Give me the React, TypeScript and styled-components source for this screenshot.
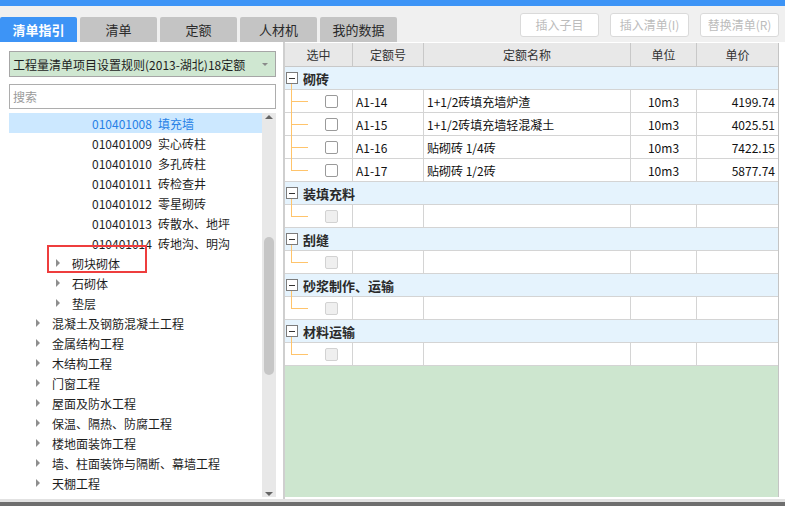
import React from 'react';
import styled, { createGlobalStyle } from 'styled-components';

const GlobalStyle = createGlobalStyle`
  html, body { margin: 0; padding: 0; width: 785px; height: 506px; overflow: hidden; background: #f0f0f0; }
  body { font-family: "Noto Sans CJK SC", "Liberation Sans", sans-serif; font-size: 12px; color: #222; }
  * { box-sizing: border-box; }
`;

const Frame = styled.div`
  display: flex;
  flex-direction: column;
  width: 785px;
  height: 506px;
`;

const TopStripe = styled.div`
  height: 6px;
  flex: none;
  background: #3d94f6;
`;

const Toolbar = styled.div`
  height: 36px;
  flex: none;
  display: flex;
  justify-content: space-between;
  padding-right: 6px;
`;

const Tabs = styled.div`
  display: flex;
  gap: 3px;
  align-self: flex-end;
`;

const Tab = styled.div<{ $active?: boolean }>`
  width: 77px;
  height: 25px;
  display: flex;
  align-items: center;
  justify-content: center;
  border-radius: 2px 2px 0 0;
  font-size: 13px;
  line-height: 1;
  background: ${(p) => (p.$active ? '#3d94f6' : '#c4c4c4')};
  color: ${(p) => (p.$active ? '#ffffff' : '#2a2a2a')};
  font-weight: ${(p) => (p.$active ? 700 : 400)};
`;

const Actions = styled.div`
  display: flex;
  gap: 11px;
  padding-top: 7px;
`;

const ActionButton = styled.button`
  width: 79px;
  height: 24px;
  padding: 0;
  background: #ffffff;
  border: 1px solid #dadada;
  border-radius: 3px;
  color: #bcbcbc;
  font-family: inherit;
  font-size: 12px;
  line-height: 1;
`;

const Main = styled.div`
  flex: 1;
  min-height: 0;
  display: flex;
`;

const LeftPanel = styled.div`
  width: 283px;
  flex: none;
  background: #ffffff;
  padding: 9px 7px 2px 9px;
  display: flex;
  flex-direction: column;
`;

const RuleSelect = styled.div`
  height: 26px;
  flex: none;
  display: flex;
  align-items: center;
  justify-content: space-between;
  padding: 0 7px 0 3px;
  background: #cfe7d1;
  border: 1px solid #a6a6a6;
  color: #1e1e1e;
  white-space: nowrap;
`;

const Caret = styled.span`
  width: 0;
  height: 0;
  border-left: 3px solid transparent;
  border-right: 3px solid transparent;
  border-top: 3px solid #8a8a8a;
`;

const SearchBox = styled.input`
  margin-top: 7px;
  width: 100%;
  height: 25px;
  flex: none;
  padding: 0 3px;
  border: 1px solid #adadad;
  font-family: inherit;
  font-size: 12px;
  color: #222;
  outline: none;
  &::placeholder { color: #9a9a9a; }
`;

const TreeBox = styled.div`
  margin-top: 4px;
  flex: 1;
  min-height: 0;
  display: flex;
`;

const TreeList = styled.div`
  flex: 1;
  overflow: hidden;
`;

const TreeRow = styled.div<{ $indent: number; $selected?: boolean }>`
  position: relative;
  height: 20px;
  display: flex;
  align-items: center;
  padding-left: ${(p) => p.$indent}px;
  white-space: nowrap;
  background: ${(p) => (p.$selected ? '#cce8ff' : 'transparent')};
  color: ${(p) => (p.$selected ? '#2680e6' : '#1e1e1e')};
`;

const Expander = styled.span`
  width: 16px;
  flex: none;
  display: flex;
  align-items: center;
  &::before {
    content: '';
    width: 0;
    height: 0;
    border-top: 4px solid transparent;
    border-bottom: 4px solid transparent;
    border-left: 4px solid #8e8e8e;
  }
`;

const Code = styled.span`
  width: 66px;
  flex: none;
`;

const Marker = styled.span`
  position: absolute;
  z-index: 1;
  left: 38px;
  top: -8px;
  width: 100px;
  height: 28px;
  border: 2px solid #ee3d3d;
  pointer-events: none;
`;

const Scrollbar = styled.div`
  width: 14px;
  flex: none;
  background: #e8e8e8;
  display: flex;
  flex-direction: column;
  align-items: center;
`;

const ArrowUp = styled.span`
  margin-top: 2px;
  width: 0;
  height: 0;
  border-left: 4px solid transparent;
  border-right: 4px solid transparent;
  border-bottom: 4px solid #666;
`;

const ArrowDown = styled.span`
  margin-bottom: 1px;
  width: 0;
  height: 0;
  border-left: 4px solid transparent;
  border-right: 4px solid transparent;
  border-top: 4px solid #666;
`;

const Thumb = styled.span<{ $offset: number; $size: number }>`
  margin-top: ${(p) => p.$offset}px;
  height: ${(p) => p.$size}px;
  width: 10px;
  border-radius: 5px;
  background: #c6c6c6;
`;

const Spacer = styled.span`
  flex: 1;
`;

const RightPanel = styled.div`
  flex: 1;
  display: flex;
  background: #ffffff;
  border-left: 2px solid #cfcfcf;
  padding: 1px 6px 2px 0;
`;

const Table = styled.div`
  flex: 1;
  display: flex;
  flex-direction: column;
  background: #cde6cf;
  border-right: 1px solid #c4c4c4;
`;

const COLS = '68px 71px 207px 66px 1fr';

const HeaderRow = styled.div`
  display: grid;
  grid-template-columns: ${COLS};
  height: 24px;
  flex: none;
  background: #e8e8e8;
  border-bottom: 1px solid #c8c8c8;
`;

const HeaderCell = styled.div`
  display: flex;
  align-items: center;
  justify-content: center;
  color: #333;
  border-right: 1px solid #c8c8c8;
  &:last-child { border-right: none; }
`;

const GroupRow = styled.div`
  position: relative;
  height: 23px;
  flex: none;
  display: flex;
  align-items: center;
  gap: 5px;
  padding-left: 1px;
  background: #e5f3fd;
  border-bottom: 1px solid #d4d4d4;
  font-size: 13px;
  font-weight: 700;
  color: #2a2a2a;
  &::after {
    content: '';
    position: absolute;
    left: 6px;
    top: 17px;
    bottom: -1px;
    width: 1px;
    background: #ffc46b;
  }
`;

const MinusBox = styled.span`
  width: 12px;
  height: 12px;
  flex: none;
  display: flex;
  align-items: center;
  justify-content: center;
  border: 1px solid #7c7c7c;
  background: #ffffff;
  &::before {
    content: '';
    width: 6px;
    height: 1px;
    background: #333;
  }
`;

const DataRow = styled.div`
  display: grid;
  grid-template-columns: ${COLS};
  height: 23px;
  flex: none;
  background: #ffffff;
  border-bottom: 1px solid #d4d4d4;
`;

const Cell = styled.div<{ $align?: 'left' | 'center' | 'right' }>`
  display: flex;
  align-items: center;
  padding: 0 ${(p) => (p.$align === 'right' ? 3 : 3)}px;
  justify-content: ${(p) =>
    p.$align === 'center' ? 'center' : p.$align === 'right' ? 'flex-end' : 'flex-start'};
  border-right: 1px solid #d4d4d4;
  color: #111;
  white-space: nowrap;
  &:last-child { border-right: none; }
`;

const SelectCell = styled.div<{ $last?: boolean }>`
  position: relative;
  display: flex;
  align-items: center;
  padding-left: 40px;
  border-right: 1px solid #d4d4d4;
  &::before {
    content: '';
    position: absolute;
    left: 6px;
    top: 0;
    width: 1px;
    height: ${(p) => (p.$last ? '11px' : '23px')};
    background: #ffc46b;
  }
  &::after {
    content: '';
    position: absolute;
    left: 6px;
    top: 11px;
    width: 17px;
    height: 1px;
    background: #ffc46b;
  }
`;

const CheckBox = styled.span<{ $disabled?: boolean }>`
  width: 13px;
  height: 13px;
  border-radius: 2px;
  border: 1px solid ${(p) => (p.$disabled ? '#d2d2d2' : '#9a9a9a')};
  background: ${(p) => (p.$disabled ? '#efefef' : '#ffffff')};
`;

type TreeItem = { level: 1 | 2 | 3; code?: string; name: string; selected?: boolean; marked?: boolean };

const treeItems: TreeItem[] = [
  { level: 3, code: '010401008', name: '填充墙', selected: true },
  { level: 3, code: '010401009', name: '实心砖柱' },
  { level: 3, code: '010401010', name: '多孔砖柱' },
  { level: 3, code: '010401011', name: '砖检查井' },
  { level: 3, code: '010401012', name: '零星砌砖' },
  { level: 3, code: '010401013', name: '砖散水、地坪' },
  { level: 3, code: '010401014', name: '砖地沟、明沟' },
  { level: 2, name: '砌块砌体', marked: true },
  { level: 2, name: '石砌体' },
  { level: 2, name: '垫层' },
  { level: 1, name: '混凝土及钢筋混凝土工程' },
  { level: 1, name: '金属结构工程' },
  { level: 1, name: '木结构工程' },
  { level: 1, name: '门窗工程' },
  { level: 1, name: '屋面及防水工程' },
  { level: 1, name: '保温、隔热、防腐工程' },
  { level: 1, name: '楼地面装饰工程' },
  { level: 1, name: '墙、柱面装饰与隔断、幕墙工程' },
  { level: 1, name: '天棚工程' },
  { level: 1, name: '油漆、涂料、裱糊工程' },
];

const indentFor = { 1: 27, 2: 47, 3: 83 } as const;

type Quota = { code: string; name: string; unit: string; price: string };
type Group = { title: string; rows: Quota[] };

const groups: Group[] = [
  {
    title: '砌砖',
    rows: [
      { code: 'A1-14', name: '1+1/2砖填充墙炉渣', unit: '10m3', price: '4199.74' },
      { code: 'A1-15', name: '1+1/2砖填充墙轻混凝土', unit: '10m3', price: '4025.51' },
      { code: 'A1-16', name: '贴砌砖 1/4砖', unit: '10m3', price: '7422.15' },
      { code: 'A1-17', name: '贴砌砖 1/2砖', unit: '10m3', price: '5877.74' },
    ],
  },
  { title: '装填充料', rows: [] },
  { title: '刮缝', rows: [] },
  { title: '砂浆制作、运输', rows: [] },
  { title: '材料运输', rows: [] },
];

export default function App() {
  return (
    <Frame>
      <GlobalStyle />
      <TopStripe />
      <Toolbar>
        <Tabs>
          <Tab $active>清单指引</Tab>
          <Tab>清单</Tab>
          <Tab>定额</Tab>
          <Tab>人材机</Tab>
          <Tab>我的数据</Tab>
        </Tabs>
        <Actions>
          <ActionButton>插入子目</ActionButton>
          <ActionButton>插入清单(I)</ActionButton>
          <ActionButton>替换清单(R)</ActionButton>
        </Actions>
      </Toolbar>
      <Main>
        <LeftPanel>
          <RuleSelect>
            <span>工程量清单项目设置规则(2013-湖北)18定额</span>
            <Caret />
          </RuleSelect>
          <SearchBox placeholder="搜索" />
          <TreeBox>
            <TreeList>
              {treeItems.map((item, i) => (
                <TreeRow key={i} $indent={indentFor[item.level]} $selected={item.selected}>
                  {item.level < 3 && <Expander />}
                  {item.code && <Code>{item.code}</Code>}
                  <span>{item.name}</span>
                  {item.marked && <Marker />}
                </TreeRow>
              ))}
            </TreeList>
            <Scrollbar>
              <ArrowUp />
              <Thumb $offset={118} $size={138} />
              <Spacer />
              <ArrowDown />
            </Scrollbar>
          </TreeBox>
        </LeftPanel>
        <RightPanel>
          <Table>
            <HeaderRow>
              <HeaderCell>选中</HeaderCell>
              <HeaderCell>定额号</HeaderCell>
              <HeaderCell>定额名称</HeaderCell>
              <HeaderCell>单位</HeaderCell>
              <HeaderCell>单价</HeaderCell>
            </HeaderRow>
            {groups.map((g) => (
              <React.Fragment key={g.title}>
                <GroupRow>
                  <MinusBox />
                  <span>{g.title}</span>
                </GroupRow>
                {g.rows.length > 0 ? (
                  g.rows.map((r, i) => (
                    <DataRow key={r.code}>
                      <SelectCell $last={i === g.rows.length - 1}>
                        <CheckBox />
                      </SelectCell>
                      <Cell>{r.code}</Cell>
                      <Cell>{r.name}</Cell>
                      <Cell $align="center">{r.unit}</Cell>
                      <Cell $align="right">{r.price}</Cell>
                    </DataRow>
                  ))
                ) : (
                  <DataRow>
                    <SelectCell $last>
                      <CheckBox $disabled />
                    </SelectCell>
                    <Cell />
                    <Cell />
                    <Cell />
                    <Cell />
                  </DataRow>
                )}
              </React.Fragment>
            ))}
          </Table>
        </RightPanel>
      </Main>
      <Footer />
    </Frame>
  );
}

const Footer = styled.div`
  height: 7px;
  flex: none;
  border-top: 3px solid #e2e2e2;
  background: #6e6e6e;
`;
